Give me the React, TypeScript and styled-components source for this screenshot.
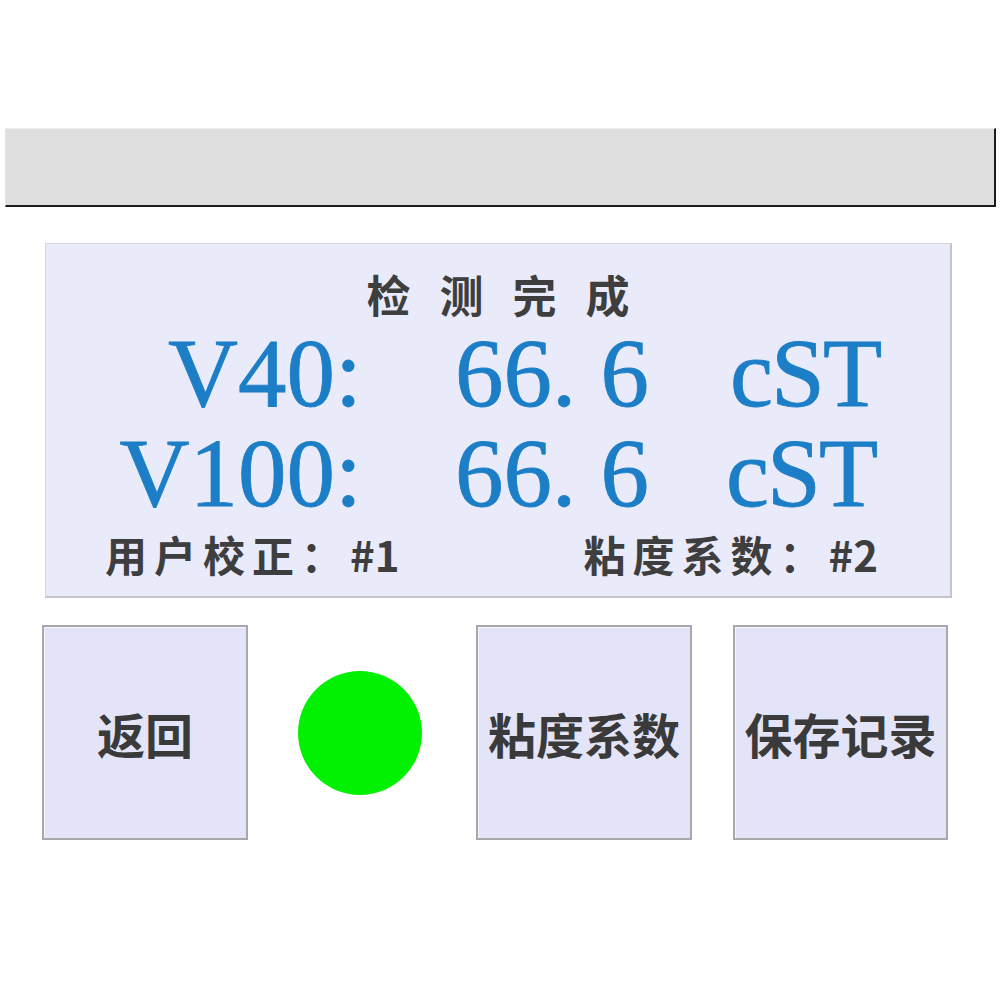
import React from "react";
import styled, { createGlobalStyle } from "styled-components";

const GlobalStyle = createGlobalStyle`
  html, body {
    margin: 0;
    padding: 0;
    background: #ffffff;
  }
  body {
    font-family: "Noto Sans CJK SC", "Noto Sans", sans-serif;
  }
`;

const Screen = styled.div`
  width: 1000px;
  height: 1000px;
  padding-top: 128px;
  box-sizing: border-box;
  background: #ffffff;
`;

const StatusBar = styled.div`
  height: 79px;
  margin: 0 4px 0 5px;
  box-sizing: border-box;
  background: #dfdfe0;
  border-top: 1px solid #eeeeee;
  border-left: 1px solid #e4e4e4;
  border-right: 2px solid #1c1c1c;
  border-bottom: 2px solid #1c1c1c;
`;

const ResultPanel = styled.section`
  margin: 36px 0 0 45px;
  width: 907px;
  height: 355px;
  box-sizing: border-box;
  padding-top: 28px;
  background: #e9eafa;
  border-top: 1px solid #d6d6de;
  border-left: 1px solid #d6d6de;
  border-right: 2px solid #c4c4cc;
  border-bottom: 2px solid #c4c4cc;
  display: flex;
  flex-direction: column;
`;

const Title = styled.h1`
  margin: 0;
  font-size: 44px;
  line-height: 44px;
  font-weight: 700;
  color: #3e3e3e;
  text-align: center;
  letter-spacing: 29px;
  padding-left: 29px;
`;

const Reading = styled.div<{ $first?: boolean }>`
  display: flex;
  align-items: baseline;
  height: 100px;
  margin-top: ${(p) => (p.$first ? "8px" : "0")};
  font-family: "Liberation Serif", "Times New Roman", serif;
  font-size: 97px;
  line-height: 100px;
  color: #1b7ec6;
  -webkit-text-stroke: 0.8px #1b7ec6;
`;

const Label = styled.span`
  width: 316px;
  text-align: right;
`;

const Value = styled.span`
  width: 275px;
  margin-left: 93px;
`;

const Dot = styled.span`
  padding-right: 0.25em;
`;

const Unit = styled.span<{ $shift?: number }>`
  margin-left: ${(p) => p.$shift ?? 0}px;
  letter-spacing: -2px;
`;

const Footer = styled.div`
  display: flex;
  justify-content: space-between;
  margin-top: 9px;
  padding: 0 72px 0 59px;
  font-size: 42px;
  line-height: 42px;
  font-weight: 700;
  color: #3e3e3e;
`;

const FooterItem = styled.span`
  letter-spacing: 7px;
`;

const Code = styled.span`
  letter-spacing: 0;
`;

const ButtonRow = styled.div`
  display: flex;
  align-items: center;
  margin-top: 27px;
  padding-left: 42px;
`;

const KeyButton = styled.button<{ $w: number; $gap?: number }>`
  width: ${(p) => p.$w}px;
  height: 215px;
  margin: 0 0 0 ${(p) => p.$gap ?? 0}px;
  padding: 0;
  box-sizing: border-box;
  background: #e3e4f8;
  border: 2px solid #a8a8ac;
  box-shadow: inset 1px 1px 0 #f4f4fc;
  font-family: "Noto Sans CJK SC", sans-serif;
  font-size: 48px;
  font-weight: 700;
  color: #3a3a3a;
  display: flex;
  align-items: center;
  justify-content: center;
  white-space: nowrap;
  cursor: pointer;
`;

const Lamp = styled.div<{ $on: boolean }>`
  width: 124px;
  height: 124px;
  border-radius: 50%;
  margin: 0 54px 0 50px;
  background: ${(p) => (p.$on ? "#02f002" : "#b0b0b0")};
`;

const readings = [
  { label: "V40:", whole: "66", frac: "6", unit: "cST", shift: 0 },
  { label: "V100:", whole: "66", frac: "6", unit: "cST", shift: -4 },
];

export default function App() {
  return (
    <>
      <GlobalStyle />
      <Screen>
        <StatusBar />
        <ResultPanel>
          <Title>检测完成</Title>
          {readings.map((r, i) => (
            <Reading key={r.label} $first={i === 0}>
              <Label>{r.label}</Label>
              <Value>
                {r.whole}
                <Dot>.</Dot>
                {r.frac}
              </Value>
              <Unit $shift={r.shift}>{r.unit}</Unit>
            </Reading>
          ))}
          <Footer>
            <FooterItem>
              用户校正：<Code>#1</Code>
            </FooterItem>
            <FooterItem>
              粘度系数：<Code>#2</Code>
            </FooterItem>
          </Footer>
        </ResultPanel>
        <ButtonRow>
          <KeyButton $w={206}>返回</KeyButton>
          <Lamp $on />
          <KeyButton $w={216}>粘度系数</KeyButton>
          <KeyButton $w={215} $gap={41}>
            保存记录
          </KeyButton>
        </ButtonRow>
      </Screen>
    </>
  );
}
